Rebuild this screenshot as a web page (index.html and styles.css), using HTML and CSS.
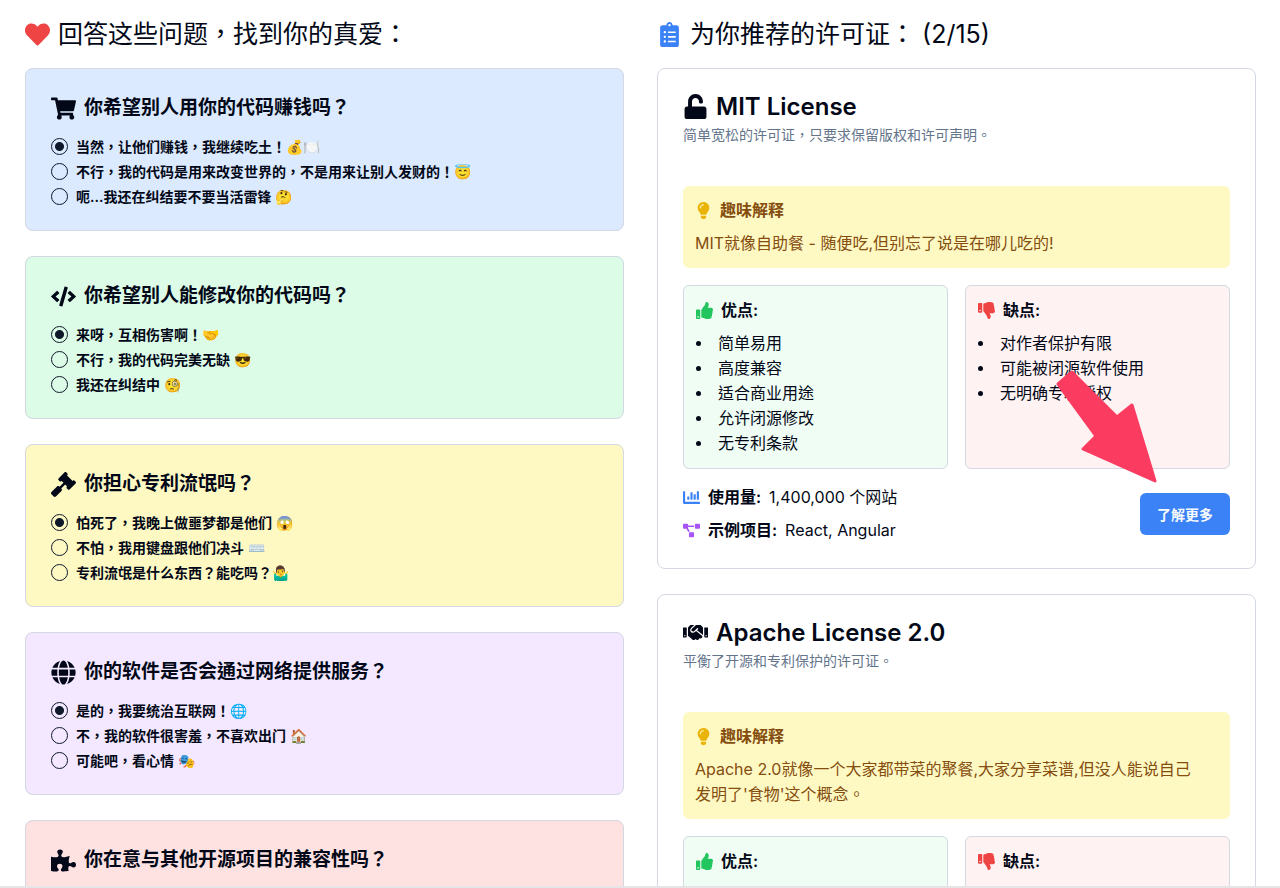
FILE: index.html
```html
<!DOCTYPE html>
<html lang="zh-TW">
<head>
<meta charset="utf-8">
<title>许可证推荐</title>
<link rel="stylesheet" href="styles.css">
</head>
<body>
<svg class="sprite" aria-hidden="true">
  <symbol id="heart" viewBox="0 0 512 512"><path d="M462.3 62.6C407.5 15.9 326 24.3 275.7 76.2L256 96.5l-19.7-20.3C186.1 24.3 104.5 15.9 49.7 62.6c-62.8 53.6-66.1 149.8-9.9 207.9l193.5 199.8c12.5 12.9 32.8 12.9 45.3 0l193.5-199.8c56.3-58.1 53-154.3-9.8-207.9z"/></symbol>
  <symbol id="cart" viewBox="0 0 576 512"><path d="M528.12 301.319l47.273-208C578.806 78.301 567.391 64 551.99 64H159.208l-9.166-44.81C147.758 8.021 137.93 0 126.529 0H24C10.745 0 0 10.745 0 24v16c0 13.255 10.745 24 24 24h69.883l70.248 343.435C147.325 417.1 136 435.222 136 456c0 30.928 25.072 56 56 56s56-25.072 56-56c0-15.674-6.447-29.835-16.824-40h209.647C430.447 426.165 424 440.326 424 456c0 30.928 25.072 56 56 56s56-25.072 56-56c0-22.172-12.888-41.332-31.579-50.405l5.517-24.276c3.413-15.018-8.002-29.319-23.403-29.319H218.117l-6.545-32h293.145c11.206 0 20.92-7.754 23.403-18.681z"/></symbol>
  <symbol id="code" viewBox="0 0 640 512"><path d="M278.9 511.5l-61-17.7c-6.4-1.8-10-8.5-8.2-14.9L346.2 8.7c1.8-6.4 8.5-10 14.9-8.2l61 17.7c6.4 1.8 10 8.5 8.2 14.9L293.8 503.3c-1.9 6.4-8.5 10.1-14.9 8.2zm-114-112.2l43.5-46.4c4.6-4.9 4.3-12.7-.8-17.2L117 256l90.6-79.7c5.1-4.5 5.5-12.3.8-17.2l-43.5-46.4c-4.5-4.8-12.1-5.1-17-.5L3.8 247.2c-5.1 4.7-5.1 12.8 0 17.5l144.1 135.1c4.9 4.6 12.5 4.4 17-.5zm327.2.6l144.1-135.1c5.1-4.7 5.1-12.8 0-17.5L492.1 112.1c-4.8-4.5-12.4-4.3-17 .5L431.6 159c-4.6 4.9-4.3 12.7.8 17.2L523 256l-90.6 79.7c-5.1 4.5-5.5 12.3-.8 17.2l43.5 46.4c4.5 4.9 12.1 5.1 17 .6z"/></symbol>
  <symbol id="gavel" viewBox="0 0 512 512"><path d="M504.971 199.362l-22.627-22.627c-9.373-9.373-24.569-9.373-33.941 0l-5.657 5.657L329.608 69.255l5.657-5.657c9.373-9.373 9.373-24.569 0-33.941L312.638 7.029c-9.373-9.373-24.569-9.373-33.941 0L154.246 131.48c-9.373 9.373-9.373 24.569 0 33.941l22.627 22.627c9.373 9.373 24.569 9.373 33.941 0l5.657-5.657 39.598 39.598-81.04 81.04-5.657-5.657c-12.497-12.497-32.758-12.497-45.255 0L9.373 412.118c-12.497 12.497-12.497 32.758 0 45.255l45.255 45.255c12.497 12.497 32.758 12.497 45.255 0l114.745-114.745c12.497-12.497 12.497-32.758 0-45.255l-5.657-5.657 81.04-81.04 39.598 39.598-5.657 5.657c-9.373 9.373-9.373 24.569 0 33.941l22.627 22.627c9.373 9.373 24.569 9.373 33.941 0l124.451-124.451c9.372-9.372 9.372-24.568 0-33.941z"/></symbol>
  <symbol id="globe" viewBox="0 0 496 512"><path d="M336.5 160C322 70.7 287.8 8 248 8s-74 62.7-88.5 152h177zM152 256c0 22.2 1.2 43.5 3.3 64h185.3c2.1-20.5 3.3-41.8 3.3-64s-1.2-43.5-3.3-64H155.3c-2.1 20.5-3.3 41.8-3.3 64zm324.7-96c-28.6-67.9-86.5-120.4-158-141.6 24.4 33.8 41.2 84.7 50 141.6h108zM177.2 18.4C105.8 39.6 47.8 92.1 19.3 160h108c8.7-56.9 25.5-107.8 49.9-141.6zM487.4 192H372.7c2.1 21 3.3 42.5 3.3 64s-1.2 43-3.3 64h114.6c5.5-20.5 8.6-41.8 8.6-64s-3.1-43.5-8.5-64zM120 256c0-21.5 1.2-43 3.3-64H8.6C3.2 212.5 0 233.8 0 256s3.2 43.5 8.6 64h114.6c-2-21-3.2-42.5-3.2-64zm39.5 96c14.5 89.3 48.7 152 88.5 152s74-62.7 88.5-152h-177zm159.3 141.6c71.4-21.2 129.4-73.7 158-141.6h-108c-8.8 56.9-25.6 107.8-50 141.6zM19.3 352c28.6 67.9 86.5 120.4 158 141.6-24.4-33.8-41.2-84.7-50-141.6h-108z"/></symbol>
  <symbol id="puzzle" viewBox="0 0 576 512"><path d="M519.442 288.651c-41.519 0-59.5 31.593-82.058 31.593C377.409 320.244 432 144 432 144s-196.288 80-196.288-3.297c0-35.827 36.288-46.25 36.288-85.985C272 19.216 243.885 0 210.539 0c-34.654 0-66.366 18.891-66.366 56.346 0 41.364 31.711 59.277 31.711 81.75C175.885 207.719 0 166.758 0 166.758v333.237s178.635 41.047 178.635-28.662c0-22.473-40-40.107-40-81.471 0-37.456 29.25-56.346 63.577-56.346 33.673 0 61.788 19.216 61.788 54.717 0 39.735-36.288 50.158-36.288 85.985 0 60.803 129.675 25.73 181.23 25.73 0 0-34.725-120.101 25.827-120.101 35.962 0 46.423 36.152 86.308 36.152C556.712 416 576 387.99 576 354.443c0-34.199-18.962-65.792-56.558-65.792z"/></symbol>
  <symbol id="clipboard" viewBox="0 0 384 512"><path d="M336 64h-80c0-35.3-28.7-64-64-64s-64 28.7-64 64H48C21.5 64 0 85.5 0 112v352c0 26.5 21.5 48 48 48h288c26.5 0 48-21.5 48-48V112c0-26.5-21.5-48-48-48zM96 424c-13.3 0-24-10.7-24-24s10.7-24 24-24 24 10.7 24 24-10.7 24-24 24zm0-96c-13.3 0-24-10.7-24-24s10.7-24 24-24 24 10.7 24 24-10.7 24-24 24zm0-96c-13.3 0-24-10.7-24-24s10.7-24 24-24 24 10.7 24 24-10.7 24-24 24zm96-192c13.3 0 24 10.7 24 24s-10.7 24-24 24-24-10.7-24-24 10.7-24 24-24zm128 368c0 4.4-3.6 8-8 8H168c-4.4 0-8-3.6-8-8v-16c0-4.4 3.6-8 8-8h144c4.4 0 8 3.6 8 8v16zm0-96c0 4.4-3.6 8-8 8H168c-4.4 0-8-3.6-8-8v-16c0-4.4 3.6-8 8-8h144c4.4 0 8 3.6 8 8v16zm0-96c0 4.4-3.6 8-8 8H168c-4.4 0-8-3.6-8-8v-16c0-4.4 3.6-8 8-8h144c4.4 0 8 3.6 8 8v16z"/></symbol>
  <symbol id="unlock" viewBox="0 0 448 512"><path d="M400 256H152V152.9c0-39.6 31.7-72.5 71.3-72.9 40-.4 72.7 32.1 72.7 72v16c0 13.3 10.7 24 24 24h32c13.3 0 24-10.7 24-24v-16C376 68 307.5-.3 223.5 0 139.5.3 72 69.5 72 153.5V256H48c-26.5 0-48 21.5-48 48v160c0 26.5 21.5 48 48 48h352c26.5 0 48-21.5 48-48V304c0-26.5-21.5-48-48-48z"/></symbol>
  <symbol id="handshake" viewBox="0 0 640 512"><path d="M434.7 64h-85.9c-8 0-15.7 3-21.6 8.4l-98.3 90c-.1.1-.2.3-.3.4-16.6 15.6-16.3 40.5-2.1 56 12.7 13.9 39.4 17.6 56.1 2.7.1-.1.3-.1.4-.2l79.9-73.2c6.5-5.9 16.7-5.5 22.6 1 6 6.5 5.5 16.6-1 22.6l-26.1 23.9L504 313.8c2.9 2.4 5.5 5 7.9 7.7V128l-54.6-54.6c-5.9-6-14.1-9.4-22.6-9.4zM544 128.2v223.9c0 17.7 14.3 32 32 32h64V128.2h-96zm48 223.9c-8.8 0-16-7.2-16-16s7.2-16 16-16 16 7.2 16 16-7.2 16-16 16zM0 384h64c17.7 0 32-14.3 32-32V128.2H0V384zm48-63.9c8.8 0 16 7.2 16 16s-7.2 16-16 16-16-7.2-16-16c0-8.9 7.2-16 16-16zm435.9 18.6L334.6 217.5l-30 27.5c-29.7 27.1-75.2 24.5-101.7-4.4-26.9-29.4-24.8-74.9 4.4-101.7L289.1 64h-83.8c-8.5 0-16.6 3.4-22.6 9.4L128 128v223.9h18.3l90.5 81.9c27.4 22.3 67.7 18.1 90-9.3l.2-.2 17.9 15.5c15.9 13 39.4 10.5 52.3-5.4l31.4-38.6 5.4 4.4c13.7 11.1 33.9 9.1 45-4.7l9.5-11.7c11.2-13.8 9.1-33.9-4.6-45.1z"/></symbol>
  <symbol id="bulb" viewBox="0 0 352 512"><path d="M96.06 454.35c.01 6.29 1.87 12.45 5.36 17.69l17.09 25.69a31.99 31.99 0 0 0 26.64 14.28h61.71a31.99 31.99 0 0 0 26.64-14.28l17.09-25.69a31.989 31.989 0 0 0 5.36-17.69l.04-38.35H96.01l.05 38.35zM0 176c0 44.37 16.45 84.85 43.56 115.78 16.52 18.85 42.36 58.23 52.21 91.45.04.26.07.52.11.78h160.24c.04-.26.07-.51.11-.78 9.85-33.22 35.69-72.6 52.21-91.45C335.55 260.85 352 220.37 352 176 352 78.61 272.91-.3 175.45 0 73.44.31 0 82.97 0 176zm176-80c-44.11 0-80 35.89-80 80 0 8.84-7.16 16-16 16s-16-7.16-16-16c0-61.76 50.24-112 112-112 8.84 0 16 7.16 16 16s-7.16 16-16 16z"/></symbol>
  <symbol id="up" viewBox="0 0 512 512"><path d="M104 224H24c-13.255 0-24 10.745-24 24v240c0 13.255 10.745 24 24 24h80c13.255 0 24-10.745 24-24V248c0-13.255-10.745-24-24-24zM64 472c-13.255 0-24-10.745-24-24s10.745-24 24-24 24 10.745 24 24-10.745 24-24 24zM384 81.452c0 42.416-25.97 66.208-33.277 94.548h101.723c33.397 0 59.397 27.746 59.553 58.098.084 17.938-7.546 37.249-19.439 49.197l-.11.11c9.836 23.337 8.237 56.037-9.308 79.469 8.681 25.895-.069 57.704-16.382 74.757 4.298 17.598 2.244 32.575-6.148 44.632C440.202 511.587 389.616 512 346.839 512l-2.845-.001c-48.287-.017-87.806-17.598-119.56-31.725-15.957-7.099-36.821-15.887-52.651-16.178-6.54-.12-11.783-5.457-11.783-11.998v-213.77c0-3.2 1.282-6.271 3.558-8.521 39.614-39.144 56.648-80.587 89.117-113.111 14.804-14.832 20.188-37.236 25.393-58.902C282.515 39.293 291.817 0 312 0c24 0 72 8 72 81.452z"/></symbol>
  <symbol id="down" viewBox="0 0 512 512"><path d="M0 56v240c0 13.255 10.745 24 24 24h80c13.255 0 24-10.745 24-24V56c0-13.255-10.745-24-24-24H24C10.745 32 0 42.745 0 56zm40 200c0-13.255 10.745-24 24-24s24 10.745 24 24-10.745 24-24 24-24-10.745-24-24zm272 256c-20.183 0-29.485-39.293-33.931-57.795-5.206-21.666-10.589-44.07-25.393-58.902-32.469-32.524-49.503-73.967-89.117-113.111a11.98 11.98 0 0 1-3.558-8.521V59.901c0-6.541 5.243-11.878 11.783-11.998 15.831-.29 36.694-9.079 52.651-16.178C256.189 17.598 295.709.017 343.995 0h2.844c42.777 0 93.363.413 113.774 29.737 8.392 12.057 10.446 27.034 6.148 44.632 16.312 17.053 25.063 48.863 16.382 74.757 17.544 23.432 19.143 56.132 9.308 79.469l.11.11c11.893 11.949 19.523 31.259 19.439 49.197-.156 30.352-26.157 58.098-59.553 58.098H350.723C358.03 364.34 384 388.132 384 430.548 384 504 336 512 312 512z"/></symbol>
  <symbol id="chart" viewBox="0 0 512 512"><path d="M332.8 320h38.4c6.4 0 12.8-6.4 12.8-12.8V172.8c0-6.4-6.4-12.8-12.8-12.8h-38.4c-6.4 0-12.8 6.4-12.8 12.8v134.4c0 6.4 6.4 12.8 12.8 12.8zm96 0h38.4c6.4 0 12.8-6.4 12.8-12.8V76.8c0-6.4-6.4-12.8-12.8-12.8h-38.4c-6.4 0-12.8 6.4-12.8 12.8v230.4c0 6.4 6.4 12.8 12.8 12.8zm-288 0h38.4c6.4 0 12.8-6.4 12.8-12.8v-70.4c0-6.4-6.4-12.8-12.8-12.8h-38.4c-6.4 0-12.8 6.4-12.8 12.8v70.4c0 6.4 6.4 12.8 12.8 12.8zm96 0h38.4c6.4 0 12.8-6.4 12.8-12.8V108.8c0-6.4-6.4-12.8-12.8-12.8h-38.4c-6.4 0-12.8 6.4-12.8 12.8v198.4c0 6.4 6.4 12.8 12.8 12.8zM496 384H64V80c0-8.84-7.16-16-16-16H16C7.16 64 0 71.16 0 80v336c0 17.67 14.33 32 32 32h464c8.84 0 16-7.16 16-16v-32c0-8.84-7.16-16-16-16z"/></symbol>
  <symbol id="diagram" viewBox="0 0 640 512"><path d="M384 320H256c-17.67 0-32 14.33-32 32v128c0 17.67 14.33 32 32 32h128c17.67 0 32-14.33 32-32V352c0-17.67-14.33-32-32-32zM192 32c0-17.67-14.33-32-32-32H32C14.33 0 0 14.33 0 32v128c0 17.67 14.33 32 32 32h95.72l73.16 128.04C211.98 300.98 232.4 288 256 288h.28L192 175.51V128h224V64H192V32zM608 0H480c-17.67 0-32 14.33-32 32v128c0 17.67 14.33 32 32 32h128c17.67 0 32-14.33 32-32V32c0-17.67-14.33-32-32-32z"/></symbol>
</svg>

<main class="page">
  <section class="column">
    <h2 class="column-title"><svg class="icon icon-red"><use href="#heart"/></svg>回答这些问题，找到你的真爱：</h2>
    <div class="stack">
      <fieldset class="question blue">
        <h3 class="question-title"><svg class="icon"><use href="#cart"/></svg>你希望别人用你的代码赚钱吗？</h3>
        <label class="option"><input type="radio" name="q1" checked><span>当然，让他们赚钱，我继续吃土！💰🍽️</span></label>
        <label class="option"><input type="radio" name="q1"><span>不行，我的代码是用来改变世界的，不是用来让别人发财的！😇</span></label>
        <label class="option"><input type="radio" name="q1"><span>呃...我还在纠结要不要当活雷锋 🤔</span></label>
      </fieldset>
      <fieldset class="question green">
        <h3 class="question-title"><svg class="icon"><use href="#code"/></svg>你希望别人能修改你的代码吗？</h3>
        <label class="option"><input type="radio" name="q2" checked><span>来呀，互相伤害啊！🤝</span></label>
        <label class="option"><input type="radio" name="q2"><span>不行，我的代码完美无缺 😎</span></label>
        <label class="option"><input type="radio" name="q2"><span>我还在纠结中 🧐</span></label>
      </fieldset>
      <fieldset class="question yellow">
        <h3 class="question-title"><svg class="icon"><use href="#gavel"/></svg>你担心专利流氓吗？</h3>
        <label class="option"><input type="radio" name="q3" checked><span>怕死了，我晚上做噩梦都是他们 😱</span></label>
        <label class="option"><input type="radio" name="q3"><span>不怕，我用键盘跟他们决斗 ⌨️</span></label>
        <label class="option"><input type="radio" name="q3"><span>专利流氓是什么东西？能吃吗？🤷‍♂️</span></label>
      </fieldset>
      <fieldset class="question purple">
        <h3 class="question-title"><svg class="icon"><use href="#globe"/></svg>你的软件是否会通过网络提供服务？</h3>
        <label class="option"><input type="radio" name="q4" checked><span>是的，我要统治互联网！🌐</span></label>
        <label class="option"><input type="radio" name="q4"><span>不，我的软件很害羞，不喜欢出门 🏠</span></label>
        <label class="option"><input type="radio" name="q4"><span>可能吧，看心情 🎭</span></label>
      </fieldset>
      <fieldset class="question red">
        <h3 class="question-title"><svg class="icon"><use href="#puzzle"/></svg>你在意与其他开源项目的兼容性吗？</h3>
        <label class="option"><input type="radio" name="q5" checked aria-label="选项一"></label>
      </fieldset>
    </div>
  </section>

  <section class="column">
    <h2 class="column-title"><svg class="icon icon-blue"><use href="#clipboard"/></svg>为你推荐的许可证： (2/15)</h2>
    <div class="stack">
      <article class="license">
        <h3 class="license-title"><svg class="icon"><use href="#unlock"/></svg>MIT License</h3>
        <p class="summary">简单宽松的许可证，只要求保留版权和许可声明。</p>
        <div class="fun">
          <h4 class="small-title"><svg class="icon-small icon-yellow"><use href="#bulb"/></svg>趣味解释</h4>
          <p>MIT就像自助餐 - 随便吃,但别忘了说是在哪儿吃的!</p>
        </div>
        <div class="compare">
          <div class="points pros">
            <h4 class="small-title"><svg class="icon-small icon-green"><use href="#up"/></svg>优点:</h4>
            <ul><li>简单易用</li><li>高度兼容</li><li>适合商业用途</li><li>允许闭源修改</li><li>无专利条款</li></ul>
          </div>
          <div class="points cons">
            <h4 class="small-title"><svg class="icon-small icon-red"><use href="#down"/></svg>缺点:</h4>
            <ul><li>对作者保护有限</li><li>可能被闭源软件使用</li><li>无明确专利授权</li></ul>
          </div>
        </div>
        <div class="footer">
          <div class="facts">
            <p class="fact"><svg class="icon-small icon-blue"><use href="#chart"/></svg><strong>使用量:</strong><span>1,400,000 个网站</span></p>
            <p class="fact"><svg class="icon-small icon-purple"><use href="#diagram"/></svg><strong>示例项目:</strong><span>React, Angular</span></p>
          </div>
          <button class="more" type="button">了解更多</button>
        </div>
        <svg class="arrow" viewBox="0 0 102 114" aria-hidden="true"><path d="M17 3L62 48L77 36L100 112L28 80L41 67L3 15Z"/></svg>
      </article>
      <article class="license">
        <h3 class="license-title"><svg class="icon"><use href="#handshake"/></svg>Apache License 2.0</h3>
        <p class="summary">平衡了开源和专利保护的许可证。</p>
        <div class="fun">
          <h4 class="small-title"><svg class="icon-small icon-yellow"><use href="#bulb"/></svg>趣味解释</h4>
          <p>Apache 2.0就像一个大家都带菜的聚餐,大家分享菜谱,但没人能说自己发明了'食物'这个概念。</p>
        </div>
        <div class="compare">
          <div class="points pros">
            <h4 class="small-title"><svg class="icon-small icon-green"><use href="#up"/></svg>优点:</h4>
          </div>
          <div class="points cons">
            <h4 class="small-title"><svg class="icon-small icon-red"><use href="#down"/></svg>缺点:</h4>
          </div>
        </div>
      </article>
    </div>
  </section>
</main>
</body>
</html>
```

FILE: styles.css
```css
* { box-sizing: border-box; }
body {
  margin: 0;
  height: 100vh;
  overflow: hidden;
  border-bottom: 2px solid #e5e5e8;
  background: #fff;
  color: #020817;
  font-family: Inter, "Noto Sans CJK TC", sans-serif;
  font-size: 16px;
  line-height: 25px;
}
h2, h3, h4, p, ul { margin: 0; padding: 0; }
.sprite { position: absolute; width: 0; height: 0; }
.page {
  display: grid;
  grid-template-columns: 1fr 1fr;
  gap: 33px;
  padding: 18px 24px 0 25px;
}
.column-title {
  display: flex;
  align-items: center;
  gap: 8px;
  margin-bottom: 17px;
  font-size: 25px;
  font-weight: 400;
  line-height: 33px;
}
.stack { display: flex; flex-direction: column; gap: 25px; }
.icon { width: 25px; height: 25px; flex: none; fill: currentColor; }
.icon-small { width: 17px; height: 17px; flex: none; }
.icon-red { fill: #ef4444; }
.icon-blue { fill: #3b82f6; }
.icon-yellow { fill: #eab308; }
.icon-green { fill: #22c55e; }
.icon-purple { fill: #a855f7; }

.question {
  display: flex;
  flex-direction: column;
  gap: 8px;
  min-width: 0;
  margin: 0;
  padding: 25px;
  border: 1px solid #d3d8e2;
  border-radius: 8px;
}
.blue { background: #dbeafe; }
.green { background: #dcfce7; }
.yellow { background: #fef9c3; }
.purple { background: #f3e8ff; }
.red { background: #fee2e2; }
.question-title {
  display: flex;
  align-items: center;
  gap: 8px;
  margin-bottom: 8px;
  font-size: 19px;
  font-weight: 600;
  line-height: 28px;
}
.option {
  display: flex;
  align-items: center;
  gap: 8px;
  font-size: 14px;
  font-weight: 600;
  line-height: 17px;
}
.option input {
  appearance: none;
  flex: none;
  width: 17px;
  height: 17px;
  margin: 0;
  border: 1px solid #0f172a;
  border-radius: 50%;
}
.option input:checked { background: radial-gradient(circle, #0f172a 4px, transparent 5px); }

.license {
  position: relative;
  padding: 25px;
  border: 1px solid #d3d8e2;
  border-radius: 8px;
}
.license-title {
  display: flex;
  align-items: center;
  gap: 8px;
  font-size: 24px;
  font-weight: 600;
  line-height: 25px;
}
.summary {
  margin: 6px 0 41px;
  color: #64748b;
  font-size: 14px;
  line-height: 20px;
}
.fun {
  margin-bottom: 17px;
  padding: 12px 24px 12px 12px;
  border-radius: 6px;
  background: #fef9c3;
  color: #854d0e;
}
.small-title {
  display: flex;
  align-items: center;
  gap: 8px;
  margin-bottom: 8px;
  font-size: 16px;
  font-weight: 600;
}
.compare { display: grid; grid-template-columns: 1fr 1fr; gap: 17px; }
.points { padding: 12px; border: 1px solid #d3d8e2; border-radius: 6px; }
.pros { background: #f0fdf4; }
.cons { background: #fef2f2; }
.points ul { list-style: none; }
.points li { display: flex; align-items: center; gap: 17px; }
.points li::before {
  content: "";
  width: 5px;
  height: 5px;
  border-radius: 50%;
  background: currentColor;
}
.footer {
  display: flex;
  align-items: center;
  justify-content: space-between;
  margin-top: 16px;
}
.facts { display: flex; flex-direction: column; gap: 8px; }
.fact { display: flex; align-items: center; gap: 8px; }
.fact strong { font-weight: 600; }
.more {
  height: 42px;
  padding: 0 17px;
  border: 0;
  border-radius: 6px;
  background: #3b82f6;
  color: #f8fafc;
  font: inherit;
  font-size: 14px;
  font-weight: 600;
}
.arrow {
  position: absolute;
  top: 300px;
  right: 98px;
  width: 102px;
  height: 114px;
  fill: #fb3b60;
  stroke: #fb3b60;
  stroke-width: 3px;
  stroke-linejoin: round;
}
```
